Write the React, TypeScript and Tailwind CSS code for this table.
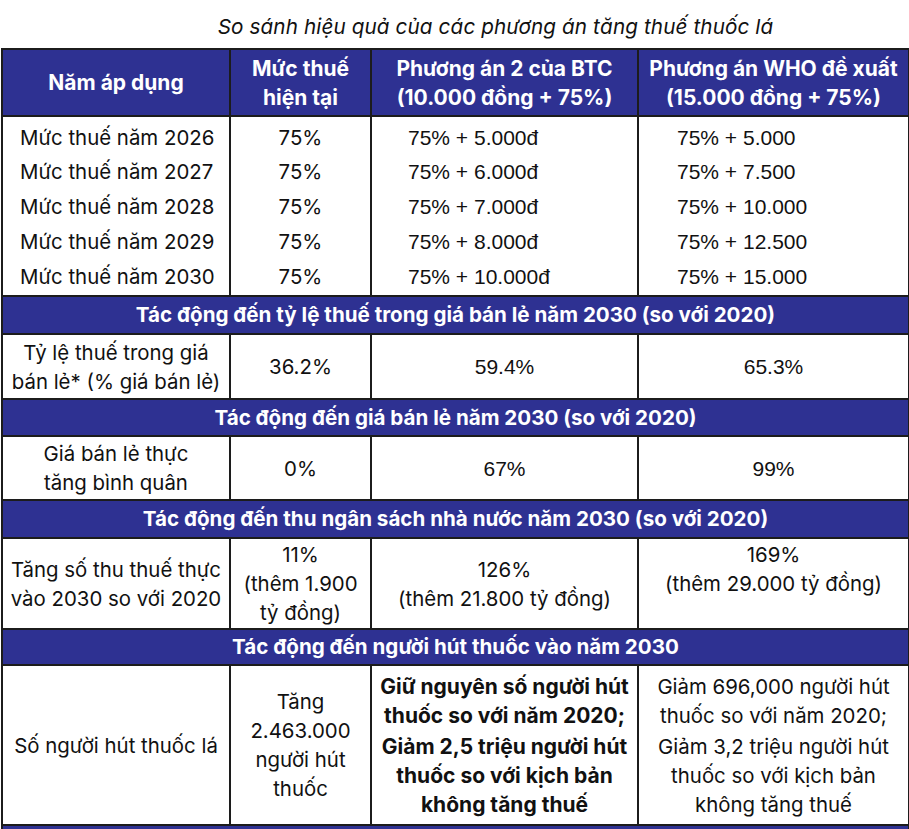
import React from "react";

const F = { fontFamily: "Inter, 'Noto Sans', sans-serif" };
const A = { fontFamily: "'Liberation Sans', Arial, sans-serif", fontSize: "21px" };

const years = [
  ["2026", "75% + 5.000đ", "75% + 5.000"],
  ["2027", "75% + 6.000đ", "75% + 7.500"],
  ["2028", "75% + 7.000đ", "75% + 10.000"],
  ["2029", "75% + 8.000đ", "75% + 12.500"],
  ["2030", "75% + 10.000đ", "75% + 15.000"],
];

function Section({ text, h }: { text: string; h: string }) {
  return (
    <tr className={h}>
      <td
        colSpan={4}
        className="border-2 border-[#1c1c1c] bg-[#2e3192] text-center text-white font-bold text-[20.6px] leading-[26px]"
      >
        {text}
      </td>
    </tr>
  );
}

export default function App() {
  const cell = "border-2 border-[#1c1c1c]";
  return (
    <div className="w-[909px] h-[829px] overflow-hidden bg-white text-[#111]" style={F}>
      <div className="h-[48px] flex items-center justify-center pl-[82px] pt-[6px]">
        <span className="italic text-[20.7px] tracking-[0.1px]">
          So sánh hiệu quả của các phương án tăng thuế thuốc lá
        </span>
      </div>
      <table className="table-fixed border-collapse w-[907px] ml-[1px] text-[20.4px] leading-[29px]">
        <colgroup>
          <col className="w-[228px]" />
          <col className="w-[141px]" />
          <col className="w-[267px]" />
          <col className="w-[271px]" />
        </colgroup>
        <tbody>
          <tr className="h-[67px] bg-[#2e3192] text-white font-bold text-[21px]">
            <td className={`${cell} text-center`}>Năm áp dụng</td>
            <td className={`${cell} text-center`}>
              Mức thuế
              <br />
              hiện tại
            </td>
            <td className={`${cell} text-center`}>
              Phương án 2 của BTC
              <br />
              (10.000 đồng + 75%)
            </td>
            <td className={`${cell} text-center whitespace-nowrap`}>
              Phương án WHO đề xuất
              <br />
              (15.000 đồng + 75%)
            </td>
          </tr>
          {years.map((y, i) => {
            const first = i === 0;
            const last = i === years.length - 1;
            const v = `border-x-2 border-[#1c1c1c] ${first ? "pt-[3px]" : ""} ${last ? "border-b-2 pb-[2px]" : ""}`;
            return (
              <tr key={y[0]} className={first ? "h-[38px]" : last ? "h-[37px]" : "h-[35px]"}>
                <td className={`${v} pl-[17px] whitespace-nowrap`}>Mức thuế năm {y[0]}</td>
                <td className={`${v} text-center`}>75%</td>
                <td className={`${v} pl-[36px] whitespace-nowrap`} style={A}>
                  {y[1]}
                </td>
                <td className={`${v} pl-[38px] whitespace-nowrap`} style={A}>
                  {y[2]}
                </td>
              </tr>
            );
          })}
          <Section text="Tác động đến tỷ lệ thuế trong giá bán lẻ năm 2030 (so với 2020)" h="h-[38px]" />
          <tr className="h-[65px]">
            <td className={`${cell} text-center whitespace-nowrap`}>
              Tỷ lệ thuế trong giá
              <br />
              bán lẻ* (% giá bán lẻ)
            </td>
            <td className={`${cell} text-center`}>36.2%</td>
            <td className={`${cell} text-center`} style={A}>
              59.4%
            </td>
            <td className={`${cell} text-center`} style={A}>
              65.3%
            </td>
          </tr>
          <Section text="Tác động đến giá bán lẻ năm 2030 (so với 2020)" h="h-[37px]" />
          <tr className="h-[64px]">
            <td className={`${cell} text-center`}>
              Giá bán lẻ thực
              <br />
              tăng bình quân
            </td>
            <td className={`${cell} text-center`}>0%</td>
            <td className={`${cell} text-center`} style={A}>
              67%
            </td>
            <td className={`${cell} text-center`} style={A}>
              99%
            </td>
          </tr>
          <Section text="Tác động đến thu ngân sách nhà nước năm 2030 (so với 2020)" h="h-[38px]" />
          <tr className="h-[91px]">
            <td className={`${cell} text-center whitespace-nowrap`}>
              Tăng số thu thuế thực
              <br />
              vào 2030 so với 2020
            </td>
            <td className={`${cell} text-center`}>
              11%
              <br />
              (thêm 1.900
              <br />
              tỷ đồng)
            </td>
            <td className={`${cell} text-center`}>
              126%
              <br />
              (thêm 21.800 tỷ đồng)
            </td>
            <td className={`${cell} text-center align-top pt-[1px]`}>
              169%
              <br />
              (thêm 29.000 tỷ đồng)
            </td>
          </tr>
          <Section text="Tác động đến người hút thuốc vào năm 2030" h="h-[36px]" />
          <tr className="h-[160px]">
            <td className={`${cell} text-center`}>Số người hút thuốc lá</td>
            <td className={`${cell} text-center`}>
              Tăng
              <br />
              2.463.000
              <br />
              người hút
              <br />
              thuốc
            </td>
            <td className={`${cell} text-center font-bold px-0 text-[21px] whitespace-nowrap`}>
              <div>
                Giữ nguyên số người hút
                <br />
                thuốc so với năm 2020;
              </div>
              <div className="mt-[2px]">
                Giảm 2,5 triệu người hút
                <br />
                thuốc so với kịch bản
                <br />
                không tăng thuế
              </div>
            </td>
            <td className={`${cell} text-center whitespace-nowrap`}>
              <div>
                Giảm 696,000 người hút
                <br />
                thuốc so với năm 2020;
              </div>
              <div className="mt-[2px]">
                Giảm 3,2 triệu người hút
                <br />
                thuốc so với kịch bản
                <br />
                không tăng thuế
              </div>
            </td>
          </tr>
          <Section text="" h="h-[38px]" />
        </tbody>
      </table>
    </div>
  );
}
